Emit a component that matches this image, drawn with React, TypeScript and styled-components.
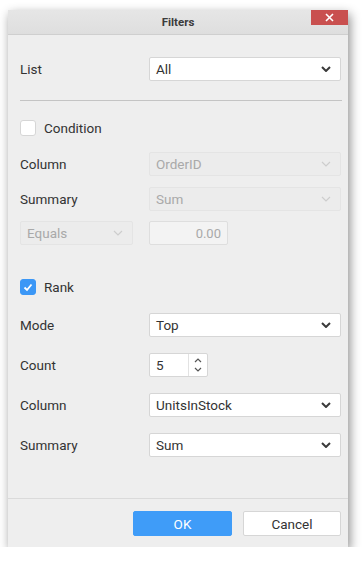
import styled, { createGlobalStyle } from 'styled-components';

const GlobalStyle = createGlobalStyle`
	body {
		margin: 0;
		background: #ffffff;
		font-family: Roboto, 'Liberation Sans', sans-serif;
	}
`;

const Page = styled.div`
	padding: 10px 0 0 8px;
`;

const Dialog = styled.div`
	width: 340px;
	height: 537px;
	display: flex;
	flex-direction: column;
	background: #eeeeee;
	box-shadow: 2px 4px 10px rgba(0, 0, 0, 0.45);
`;

const Header = styled.div`
	height: 24px;
	display: flex;
	align-items: flex-start;
	justify-content: center;
	position: relative;
	background: linear-gradient(#e6e6e6, #dedede);
	border-bottom: 1px solid #cfcfcf;
`;

const Title = styled.div`
	font-size: 11.5px;
	font-weight: 700;
	line-height: 24px;
	color: #3c3c3c;
`;

const CloseButton = styled.div`
	position: absolute;
	top: 0;
	right: 0;
	width: 37px;
	height: 15px;
	background: #c9504f;
	display: flex;
	align-items: center;
	justify-content: center;
`;

const Body = styled.div`
	flex: 1;
	padding: 22px 7px 0 12px;
	display: flex;
	flex-direction: column;
`;

const Row = styled.div<{ $top?: number; $height?: number }>`
	margin-top: ${(p) => p.$top ?? 0}px;
	height: ${(p) => p.$height ?? 24}px;
	display: grid;
	grid-template-columns: 129px 1fr;
	align-items: center;
`;

const CheckRow = styled.div<{ $top: number }>`
	margin-top: ${(p) => p.$top}px;
	height: 16px;
	display: flex;
	align-items: center;
	gap: 8px;
`;

const PairRow = styled.div<{ $top: number }>`
	margin-top: ${(p) => p.$top}px;
	height: 24px;
	display: flex;
	gap: 16px;
`;

const Label = styled.div`
	font-size: 13.5px;
	color: #333333;
`;

const Separator = styled.div`
	margin-top: 19px;
	margin-right: -1px;
	height: 1px;
	background: #c4c4c4;
`;

const Box = styled.div<{ $checked?: boolean }>`
	width: 16px;
	height: 16px;
	box-sizing: border-box;
	border-radius: 3px;
	border: 1px solid ${(p) => (p.$checked ? '#3b97f6' : '#d6d6d6')};
	background: ${(p) => (p.$checked ? '#3b97f6' : '#ffffff')};
	display: flex;
	align-items: center;
	justify-content: center;
`;

const Select = styled.div<{ $disabled?: boolean; $width?: number }>`
	height: 24px;
	width: ${(p) => (p.$width ? `${p.$width}px` : 'auto')};
	box-sizing: border-box;
	border: 1px solid ${(p) => (p.$disabled ? '#e4e4e4' : '#d6d6d6')};
	border-radius: 2px;
	background: ${(p) => (p.$disabled ? '#ececec' : '#ffffff')};
	color: ${(p) => (p.$disabled ? '#a9a9a9' : '#333333')};
	font-size: 13.5px;
	display: flex;
	align-items: center;
	justify-content: space-between;
	padding: 0 9px 0 6px;
`;

const NumberBox = styled.div`
	width: 79px;
	height: 24px;
	box-sizing: border-box;
	border: 1px solid #dedede;
	border-radius: 2px;
	background: #f3f3f3;
	color: #a9a9a9;
	font-size: 13px;
	display: flex;
	align-items: center;
	justify-content: flex-end;
	padding-right: 6px;
`;

const Spinner = styled.div`
	width: 59px;
	height: 24px;
	box-sizing: border-box;
	border: 1px solid #d6d6d6;
	border-radius: 2px;
	background: #ffffff;
	display: flex;
`;

const SpinValue = styled.div`
	flex: 1;
	font-size: 13.5px;
	color: #333333;
	display: flex;
	align-items: center;
	padding-left: 6px;
	border-right: 1px solid #e2e2e2;
`;

const SpinArrows = styled.div`
	width: 18px;
	display: flex;
	flex-direction: column;
	align-items: center;
	justify-content: center;
	gap: 4px;
`;

const Footer = styled.div`
	border-top: 1px solid #dadada;
	padding: 12px 7px 11px 0;
	display: flex;
	justify-content: flex-end;
	gap: 11px;
`;

const Button = styled.div<{ $primary?: boolean }>`
	width: ${(p) => (p.$primary ? 99 : 98)}px;
	height: 25px;
	box-sizing: border-box;
	border-radius: 2px;
	border: 1px solid ${(p) => (p.$primary ? '#3f9cf8' : '#d6d6d6')};
	background: ${(p) => (p.$primary ? '#3f9cf8' : '#ffffff')};
	color: ${(p) => (p.$primary ? '#ffffff' : '#333333')};
	font-size: 13.5px;
	display: flex;
	align-items: center;
	justify-content: center;
`;

const Chevron = ({ disabled }: { disabled?: boolean }) => (
	<svg width="10" height="6" viewBox="0 0 10 6">
		<path
			d="M1 1 L5 5 L9 1"
			fill="none"
			stroke={disabled ? '#cdcdcd' : '#3a3a3a'}
			strokeWidth={disabled ? 1.2 : 2}
		/>
	</svg>
);

const SmallArrow = ({ up }: { up?: boolean }) => (
	<svg width="8" height="5" viewBox="0 0 8 5">
		<path d={up ? 'M1 4 L4 1 L7 4' : 'M1 1 L4 4 L7 1'} fill="none" stroke="#555" strokeWidth="1.2" />
	</svg>
);

const DropDown = ({ value, disabled, width }: { value: string; disabled?: boolean; width?: number }) => (
	<Select $disabled={disabled} $width={width}>
		<span>{value}</span>
		<Chevron disabled={disabled} />
	</Select>
);

export default function App() {
	return (
		<Page>
			<GlobalStyle />
			<Dialog>
				<Header>
					<Title>Filters</Title>
					<CloseButton>
						<svg width="9" height="9" viewBox="0 0 9 9">
							<path d="M1 1 L8 8 M8 1 L1 8" stroke="#ffffff" strokeWidth="1.6" />
						</svg>
					</CloseButton>
				</Header>
				<Body>
					<Row>
						<Label>List</Label>
						<DropDown value="All" />
					</Row>
					<Separator />
					<CheckRow $top={19}>
						<Box />
						<Label>Condition</Label>
					</CheckRow>
					<Row $top={16}>
						<Label>Column</Label>
						<DropDown value="OrderID" disabled />
					</Row>
					<Row $top={11}>
						<Label>Summary</Label>
						<DropDown value="Sum" disabled />
					</Row>
					<PairRow $top={10}>
						<DropDown value="Equals" disabled width={113} />
						<NumberBox>0.00</NumberBox>
					</PairRow>
					<CheckRow $top={34}>
						<Box $checked>
							<svg width="10" height="9" viewBox="0 0 10 9">
								<path d="M1.5 4.5 L4 7 L8.5 1.5" fill="none" stroke="#ffffff" strokeWidth="1.8" />
							</svg>
						</Box>
						<Label>Rank</Label>
					</CheckRow>
					<Row $top={18}>
						<Label>Mode</Label>
						<DropDown value="Top" />
					</Row>
					<Row $top={16}>
						<Label>Count</Label>
						<Spinner>
							<SpinValue>5</SpinValue>
							<SpinArrows>
								<SmallArrow up />
								<SmallArrow />
							</SpinArrows>
						</Spinner>
					</Row>
					<Row $top={16}>
						<Label>Column</Label>
						<DropDown value="UnitsInStock" />
					</Row>
					<Row $top={16}>
						<Label>Summary</Label>
						<DropDown value="Sum" />
					</Row>
				</Body>
				<Footer>
					<Button $primary>OK</Button>
					<Button>Cancel</Button>
				</Footer>
			</Dialog>
		</Page>
	);
}
